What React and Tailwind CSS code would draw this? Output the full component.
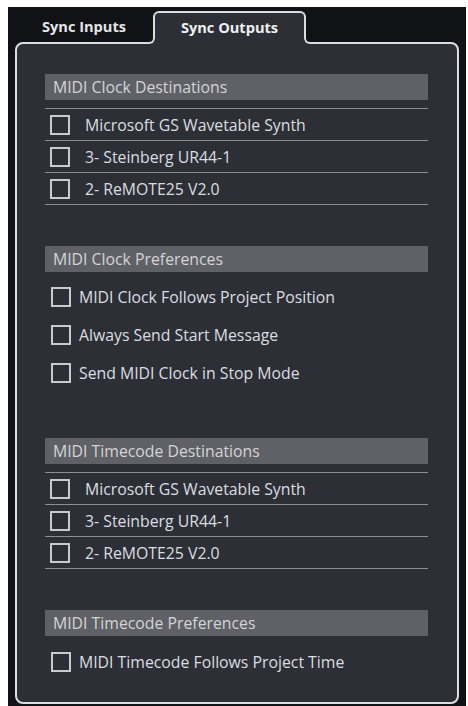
import React from "react";

const destinations = ["Microsoft GS Wavetable Synth", "3- Steinberg UR44-1", "2- ReMOTE25 V2.0"];

const Box = () => (
  <span className="block w-[20px] h-[20px] border-2 border-[#c9cacd] shrink-0" />
);

const Header = ({ children, className = "" }) => (
  <div className={`h-[26px] bg-[#5f6166] text-[#d3d4d6] text-[15.8px] leading-[27px] pl-[8px] ${className}`}>
    {children}
  </div>
);

// --- list with separator lines ---
const DestList = () => (
  <div className="mt-[8px] border-b border-[#8c8e92]">
    {destinations.map((d) => (
      <div key={d} className="h-[32px] border-t border-[#8c8e92] flex items-center pl-[5px]">
        <Box />
        <span className="ml-[15px] pt-[2px] text-[15.8px] text-[#dcdde0]">{d}</span>
      </div>
    ))}
  </div>
);

const Pref = ({ label }) => (
  <div className="h-[38px] flex items-center pl-[6px]">
    <Box />
    <span className="ml-[8px] pt-[2px] text-[15.8px] text-[#dcdde0]">{label}</span>
  </div>
);

export default function App() {
  return (
    <div
      className="w-[468px] h-[706px] bg-white pt-[7px] pl-[8px] pr-[2px]"
      style={{ fontFamily: '"Open Sans", "Noto Sans", sans-serif' }}
    >
      <div className="h-full bg-[#111215] flex flex-col px-[7px] pb-[2px]">
        {/* Tabs */}
        <div className="flex items-end h-[35px] shrink-0">
          <div className="w-[138px] h-[31px] flex items-center justify-center text-[14.6px] font-bold text-[#e4e5e7]">
            Sync Inputs
          </div>
          <div className="relative z-10 w-[153px] h-[33px] -mb-[2px] border-2 border-b-0 border-[#dcdddf] rounded-t-[6px] bg-[#2c2f36] flex items-center justify-center text-[14.6px] font-bold text-[#eeeff1] pb-[2px]">
            Sync Outputs
            <span className="absolute bottom-0 left-[-8px] w-[8px] h-[8px] bg-[#2c2f36]">
              <span className="block w-full h-full bg-[#111215] border-b-2 border-r-2 border-[#dcdddf] rounded-br-[6px]" />
            </span>
            <span className="absolute bottom-0 right-[-8px] w-[8px] h-[8px] bg-[#2c2f36]">
              <span className="block w-full h-full bg-[#111215] border-b-2 border-l-2 border-[#dcdddf] rounded-bl-[6px]" />
            </span>
          </div>
        </div>

        {/* Panel */}
        <div className="flex-1 bg-[#2c2f36] border-2 border-[#dcdddf] rounded-[8px] pl-[28px] pr-[29px] pt-[30px]">
          <Header>MIDI Clock Destinations</Header>
          <DestList />

          <Header className="mt-[41px]">MIDI Clock Preferences</Header>
          <div className="mt-[6px]">
            <Pref label="MIDI Clock Follows Project Position" />
            <Pref label="Always Send Start Message" />
            <Pref label="Send MIDI Clock in Stop Mode" />
          </div>

          <Header className="mt-[46px]">MIDI Timecode Destinations</Header>
          <DestList />

          <Header className="mt-[41px]">MIDI Timecode Preferences</Header>
          <div className="mt-[7px]">
            <Pref label="MIDI Timecode Follows Project Time" />
          </div>
        </div>
      </div>
    </div>
  );
}
